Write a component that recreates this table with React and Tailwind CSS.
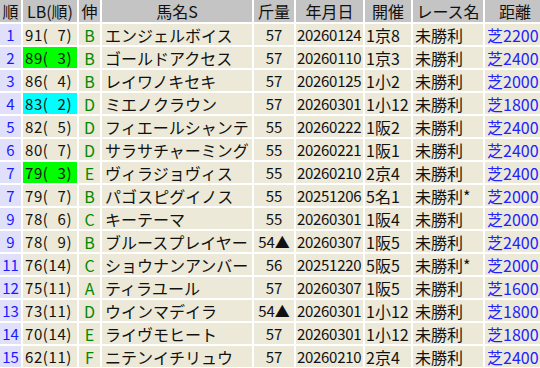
import React from "react";

const rows = [
  ["1", "91( 7)", "", "B", "エンジェルボイス", "57", "20260124", "1京8", "未勝利", "芝2200"],
  ["2", "89( 3)", "g", "B", "ゴールドアクセス", "57", "20260110", "1京3", "未勝利", "芝2400"],
  ["3", "86( 4)", "", "B", "レイワノキセキ", "57", "20260125", "1小2", "未勝利", "芝2000"],
  ["4", "83( 2)", "c", "D", "ミエノクラウン", "57", "20260301", "1小12", "未勝利", "芝1800"],
  ["5", "82( 5)", "", "D", "フィエールシャンテ", "55", "20260222", "1阪2", "未勝利", "芝2400"],
  ["6", "80( 7)", "", "D", "サラサチャーミング", "55", "20260221", "1阪1", "未勝利", "芝2400"],
  ["7", "79( 3)", "g", "E", "ヴィラジョヴィス", "55", "20260210", "2京4", "未勝利", "芝2400"],
  ["7", "79( 7)", "", "B", "パゴスピグイノス", "55", "20251206", "5名1", "未勝利*", "芝2000"],
  ["9", "78( 6)", "", "C", "キーテーマ", "55", "20260301", "1阪4", "未勝利", "芝2000"],
  ["9", "78( 9)", "", "B", "ブルースプレイヤー", "54▲", "20260307", "1阪5", "未勝利", "芝2400"],
  ["11", "76(14)", "", "C", "ショウナンアンバー", "56", "20251220", "5阪5", "未勝利*", "芝2000"],
  ["12", "75(11)", "", "A", "ティラユール", "57", "20260307", "1阪5", "未勝利", "芝1600"],
  ["13", "73(11)", "", "D", "ウインマデイラ", "54▲", "20260301", "1小12", "未勝利", "芝1800"],
  ["14", "70(14)", "", "E", "ライヴモヒート", "57", "20260301", "1小12", "未勝利", "芝1800"],
  ["15", "62(11)", "", "F", "ニテンイチリュウ", "57", "20260210", "2京4", "未勝利", "芝2400"],
];

const headers = ["順", "LB(順)", "伸", "馬名S", "斤量", "年月日", "開催", "レース名", "距離"];

const lbBg = { g: "bg-[#00ff00]", c: "bg-[#00ffff]", "": "bg-[#ece9d8]" };

// "91( 7)" -> keep the blank as wide as a digit
const LB = ({ text }) => {
  const parts = text.split(" ");
  if (parts.length === 1) return text;
  return (
    <>
      {parts[0]}
      <span className="invisible">0</span>
      {parts[1]}
    </>
  );
};

export default function App() {
  return (
    <div
      className="w-[540px] h-[368px] overflow-hidden bg-white text-[16px] leading-none text-[#111]"
      style={{ fontFamily: '"Noto Sans CJK JP", "Noto Sans", sans-serif' }}
    >
      <div className="grid grid-cols-[21px_54px_21px_150px_40px_67px_46px_70px_60px] auto-rows-[21px] grid-rows-[22px] gap-[2px] w-max">
        {headers.map((h) => (
          <div key={h} className="bg-[#c4c4c4] flex items-center justify-center whitespace-nowrap">
            {h}
          </div>
        ))}
        {rows.map((r, i) => (
          <React.Fragment key={i}>
            <div className="bg-[#e0e0fa] text-[#1a1aff] text-[15px] flex items-center justify-center">{r[0]}</div>
            <div className={`${lbBg[r[2]]} text-[15px] tracking-[0.6px] flex items-center pl-[2px] whitespace-nowrap`}>
              <LB text={r[1]} />
            </div>
            <div className="bg-[#ece9d8] text-[#008a00] flex items-center justify-center">{r[3]}</div>
            <div className="bg-[#ece9d8] flex items-center pl-[3px] whitespace-nowrap overflow-hidden">{r[4]}</div>
            <div className="bg-[#ece9d8] text-[15px] flex items-center justify-center whitespace-nowrap">{r[5]}</div>
            <div className="bg-[#ece9d8] text-[15px] tracking-[-0.3px] flex items-center pl-[1px] whitespace-nowrap">{r[6]}</div>
            <div className="bg-[#ece9d8] flex items-center pl-[1px] whitespace-nowrap">{r[7]}</div>
            <div className="bg-[#ece9d8] flex items-center pl-[2px] whitespace-nowrap">{r[8]}</div>
            <div className="bg-[#ece9d8] text-[#2222ff] flex items-center pl-[2px] whitespace-nowrap">{r[9]}</div>
          </React.Fragment>
        ))}
      </div>
    </div>
  );
}
